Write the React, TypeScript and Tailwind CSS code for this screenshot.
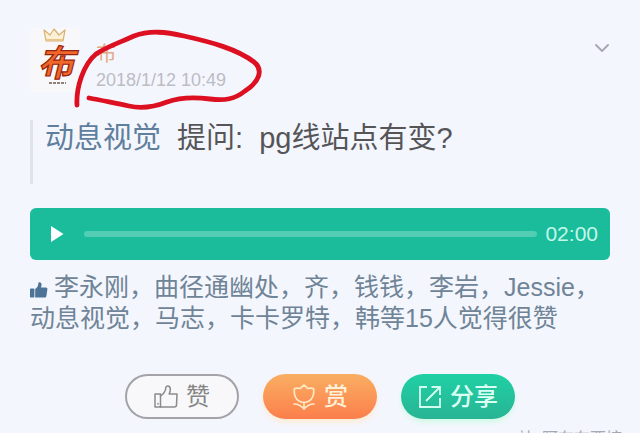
import { ChevronDown } from 'lucide-react'

const likers = ['李永刚', '曲径通幽处', '齐', '钱钱', '李岩', 'Jessie', '动息视觉', '马志', '卡卡罗特', '韩']

function Avatar() {
  return (
    <svg viewBox="0 0 50 64" className="w-[50px] h-16 shrink-0" role="img" aria-label="布">
      <rect width="50" height="64" rx="4" fill="#f8f8fa" />
      <path d="M16 13 L14 2 L20 7 L24 1 L29 7 L35 2 L33 13 Z" fill="#fbf0d8" stroke="#d9b070" strokeWidth="1.2" strokeLinejoin="round" />
      <path d="M16 12 H33" stroke="#e6c48a" strokeWidth="2" />
      <text
        x="26"
        y="48"
        textAnchor="middle"
        fontSize="36"
        fontWeight="700"
        fontStyle="italic"
        fontFamily="'Noto Sans CJK SC', sans-serif"
        fill="#f2672a"
        stroke="#96250f"
        strokeWidth="1.2"
      >
        布
      </text>
      <path d="M19 55 H36" stroke="#6b5a50" strokeWidth="1.5" strokeDasharray="3 1" />
    </svg>
  )
}

function ThumbSolid() {
  return (
    <svg viewBox="0 0 18 18" className="inline-block w-[18px] h-[18px] mr-1.5 align-[-3px]" fill="#4d7396" aria-hidden="true">
      <rect x="0" y="7.5" width="4.4" height="9" rx="0.8" />
      <path d="M5.2 8 C7.5 6.5 8.3 4.5 8.3 2.2 C8.5 0.6 11.5 0.8 11.6 3.5 C11.6 4.8 11.2 5.8 10.9 6.6 H15.8 C17.3 6.6 17.7 7.8 17.3 9 L16.4 15 C16.2 16.1 15.5 16.5 14.6 16.5 H5.2 Z" />
    </svg>
  )
}

function ThumbOutline() {
  return (
    <svg viewBox="0 0 24 24" className="w-6 h-6" fill="none" stroke="#8a8a8a" strokeWidth="1.5" strokeLinejoin="round" strokeLinecap="round" aria-hidden="true">
      <path d="M1 9 H6.5 V22 H1 Z" />
      <path d="M6.5 11 C9.5 9 11.5 6.5 11.8 3 C12 0 16.3 0.5 16.3 4 C16.3 6 15.8 7.5 15.2 9 H23 L22.5 20 C22.5 21.5 21.5 22 20 22 H6.5" />
      <path d="M4 18.5 V19" />
    </svg>
  )
}

function Tulip() {
  return (
    <svg viewBox="0 0 24 26" className="w-6 h-[26px]" fill="none" stroke="#ffe9c4" strokeWidth="1.7" strokeLinejoin="round" strokeLinecap="round" aria-hidden="true">
      <path d="M12 1 C13.5 2 14.5 3 15.5 4.5 C17.5 3.8 19.5 4 21.5 4.5 C22.5 11 20.5 17.5 12 18.5 C3.5 17.5 1.5 11 2.5 4.5 C4.5 4 6.5 3.8 8.5 4.5 C9.5 3 10.5 2 12 1 Z" />
      <path d="M12 18.5 V25 M2 20 C6 20 9.5 22 12 25 C14.5 22 18 20 22 20" />
    </svg>
  )
}

function ShareBox() {
  return (
    <svg viewBox="0 0 24 24" className="w-6 h-6" fill="none" stroke="#d3fff0" strokeWidth="1.8" aria-hidden="true">
      <path d="M9 2 H2 V22 H22 V13" />
      <path d="M8 16 L21.5 2.5 M13.5 2 H22 V10" />
    </svg>
  )
}

function RedCircle() {
  return (
    <svg viewBox="0 0 280 120" className="pointer-events-none absolute left-0 top-0 w-[280px] h-[120px]" fill="none" aria-hidden="true">
      <path
        d="M77 105 C76 88 83 65 96 54 C106 47 121 42 134 36 C150 30 166 32 184 36 C211 42 237 49 254 62 C264 70 259 82 245 91 C235 99 225 101 210 99 C194 97 178 98 167 102 C154 107 142 109 129 106 C113 103 101 100 89 98"
        stroke="#dc1020"
        strokeWidth="4.8"
        strokeLinecap="round"
        strokeLinejoin="round"
      />
    </svg>
  )
}

export default function App() {
  return (
    <main
      lang="zh-CN"
      className="relative h-screen overflow-hidden bg-[#f4f6fe] px-[30px] pt-7 font-['Liberation_Sans','Noto_Sans_CJK_SC',sans-serif]"
    >
      <header className="-mr-1 flex items-start">
        <Avatar />
        <div className="ml-4 mt-3">
          <h2 className="text-xl leading-7 text-[#e3a983]">布</h2>
          <time className="block text-lg leading-6 text-[#bcbcc4]">2018/1/12 10:49</time>
        </div>
        <button type="button" aria-label="更多" className="ml-auto mt-2">
          <ChevronDown className="w-6 h-6 text-[#a9a9b3]" strokeWidth={2} />
        </button>
      </header>

      <section className="mt-7 min-h-16 border-l-3 border-[#e2e3e8] pl-3 text-[29px] leading-9 text-[#555558]">
        <a href="#asker" className="mr-4 text-[#5f7f9c]">动息视觉</a>
        提问:&nbsp; pg线站点有变?
      </section>

      <section className="mt-6 flex h-[52px] items-center rounded-md bg-[#1abc9c] pl-5 pr-3">
        <button type="button" aria-label="播放">
          <svg viewBox="0 0 14 18" className="w-[14px] h-[18px]" fill="#ffffff" aria-hidden="true">
            <path d="M1 1 L13.5 9 L1 17 Z" />
          </svg>
        </button>
        <div className="ml-5 mr-2 h-[6px] flex-1 rounded-sm bg-[#53cdb3]" />
        <span className="text-[21px] text-[#c5f7e9]">02:00</span>
      </section>

      <p className="mt-3 text-[25px] leading-[31px] text-[#6f8496]">
        <ThumbSolid />
        {likers.join('，')}等15人觉得很赞
      </p>

      <div className="mt-10 flex justify-center gap-6">
        <button type="button" className="flex h-[45px] w-[114px] items-center justify-center gap-2 rounded-full border-2 border-[#a3a3a8] bg-[#f8f8fb] text-2xl text-[#858585]">
          <ThumbOutline />
          赞
        </button>
        <button type="button" className="flex h-[45px] w-[114px] items-center justify-center gap-2 rounded-full bg-linear-to-b from-[#f9ae62] to-[#fb7e4c] text-2xl font-medium text-[#fff0d8] shadow-md shadow-orange-100">
          <Tulip />
          赏
        </button>
        <button type="button" className="flex h-[45px] w-[114px] items-center justify-center gap-2 rounded-full bg-linear-to-b from-[#1fd0a5] to-[#28b494] text-2xl font-medium text-[#dcfff4] shadow-md shadow-emerald-100">
          <ShareBox />
          分享
        </button>
      </div>

      <footer className="-mr-3 mt-2 flex justify-end gap-2 text-base text-[#a6a9b0]">
        <span>站</span>
        <span>阿布布西塘</span>
      </footer>

      <RedCircle />
    </main>
  )
}
